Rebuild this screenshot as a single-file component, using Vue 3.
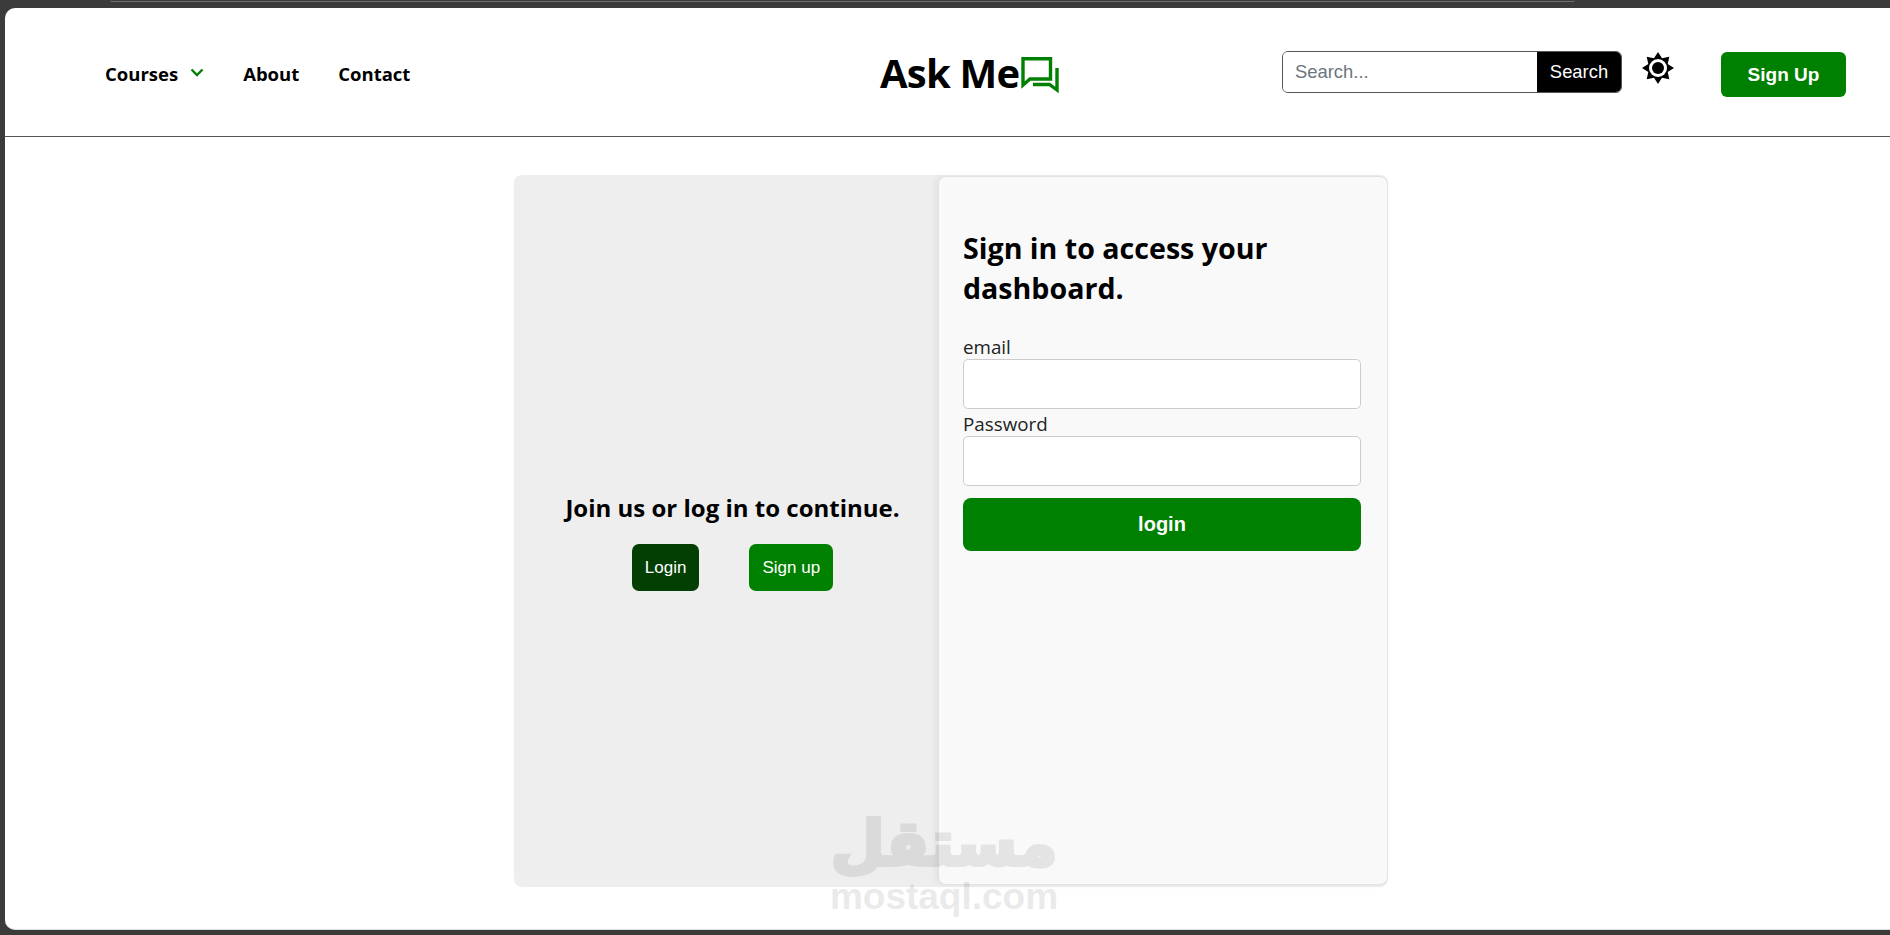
<script setup>
const navLinks = ['About', 'Contact'];

// 8 pointed star for the theme toggle
const starPoints = Array.from({ length: 16 }, (_, i) => {
  const r = i % 2 === 0 ? 16 : 10.5;
  const a = (i * Math.PI) / 8 - Math.PI / 2;
  return `${(16 + r * Math.cos(a)).toFixed(2)},${(16 + r * Math.sin(a)).toFixed(2)}`;
}).join(' ');
</script>

<template>
  <div class="screen">
    <div class="browserTop"><div class="addressEdge"></div></div>
    <div class="page">
      <header class="header">
        <nav class="nav">
          <a class="navLink courses">
            Courses
            <svg class="chevron" width="14" height="9" viewBox="0 0 14 9">
              <path d="M1.5 1.5 7 7l5.5-5.5" fill="none" stroke="#008000" stroke-width="2.4" />
            </svg>
          </a>
          <a v-for="link in navLinks" :key="link" class="navLink">{{ link }}</a>
        </nav>

        <div class="logo">
          <span class="logoText">Ask Me</span>
          <svg class="logoIcon" width="38" height="37" viewBox="0 0 38 37">
            <path d="M2 1.7H29.5V22H9L2 28Z" fill="none" stroke="#008000" stroke-width="3.4" />
            <path d="M36 11V33L28.5 27.5H12" fill="none" stroke="#008000" stroke-width="3.4" />
          </svg>
        </div>

        <div class="headerRight">
          <form class="search" @submit.prevent>
            <input class="searchInput" type="text" placeholder="Search..." />
            <button class="searchBtn" type="button">Search</button>
          </form>
          <svg class="sun" width="32" height="32" viewBox="0 0 32 32">
            <polygon :points="starPoints" fill="#000" />
            <circle cx="16" cy="16" r="9" fill="#fff" />
            <circle cx="16" cy="16" r="6" fill="#000" />
          </svg>
          <button class="signUpBtn" type="button">Sign Up</button>
        </div>
      </header>

      <main class="main">
        <section class="card">
          <div class="sidePanel">
            <h2 class="sideTitle">Join us or log in to continue.</h2>
            <div class="sideBtns">
              <button class="sideBtn dark" type="button">Login</button>
              <button class="sideBtn" type="button">Sign up</button>
            </div>
          </div>
          <form class="formPanel" @submit.prevent>
            <h1 class="formTitle">Sign in to access your dashboard.</h1>
            <label class="label" for="email">email</label>
            <input id="email" class="field" type="email" />
            <label class="label" for="password">Password</label>
            <input id="password" class="field" type="password" />
            <button class="loginBtn" type="button">login</button>
          </form>
        </section>
      </main>

      <div class="watermark">
        <span class="wmArabic" dir="rtl">مستقل</span>
        <span class="wmLatin">mostaql.com</span>
      </div>
    </div>
  </div>
</template>

<style>
html,
body {
  margin: 0;
  background: #3b3b3b;
}
</style>

<style scoped>
.screen {
  height: 935px;
  overflow: hidden;
  background: #3b3b3b;
  font-family: "Open Sans", "Noto Sans", sans-serif;
  color: #000;
}

.browserTop {
  height: 8px;
  padding: 0 315px 0 110px;
}

.addressEdge {
  height: 1px;
  border-bottom: 1px solid #6f6f6f;
  border-radius: 0 0 8px 8px;
}

.page {
  position: relative;
  height: 922px;
  margin-left: 5px;
  background: #fff;
  border-radius: 10px 0 0 10px;
  border-bottom: 1px solid #ddd;
  box-sizing: border-box;
  overflow: hidden;
}

.header {
  height: 129px;
  box-sizing: border-box;
  border-bottom: 1px solid #555;
  display: grid;
  grid-template-columns: 775px 402px 1fr;
  align-items: center;
  padding: 0 39px 0 100px;
}

.nav {
  display: flex;
  align-items: center;
  gap: 39px;
  margin-top: 3px;
}

.navLink {
  font-size: 18.5px;
  font-weight: 700;
  line-height: 24px;
}

.courses {
  display: flex;
  align-items: center;
  gap: 12px;
}

.chevron {
  margin-top: -2px;
}

.logo {
  display: flex;
  align-items: flex-start;
  align-self: start;
  margin-top: 38px;
}

.logoText {
  font-size: 40px;
  font-weight: 700;
  line-height: 54px;
  letter-spacing: -0.8px;
}

.logoIcon {
  margin: 11px 0 0 2px;
  flex: none;
}

.headerRight {
  display: flex;
  align-items: flex-start;
  align-self: start;
  margin-top: 43px;
}

.search {
  display: flex;
  width: 340px;
  height: 42px;
  box-sizing: border-box;
  border: 1px solid #555;
  border-radius: 6px;
  overflow: hidden;
}

.searchInput {
  flex: 1;
  min-width: 0;
  border: 0;
  outline: 0;
  padding: 0 12px;
  font: 18.4px "Liberation Sans", Arial, sans-serif;
  color: #212529;
  background: #fff;
}

.searchInput::placeholder {
  color: #6c757d;
  opacity: 1;
}

.searchBtn {
  width: 84px;
  border: 0;
  background: #000;
  color: #fff;
  font: 18.4px "Liberation Sans", Arial, sans-serif;
  padding: 0;
}

.sun {
  margin: 1px 0 0 20px;
  flex: none;
}

.signUpBtn {
  width: 125px;
  height: 45px;
  margin: 1px 0 0 47px;
  border: 0;
  border-radius: 6px;
  background: #008000;
  color: #fff;
  font: 700 19px "Liberation Sans", Arial, sans-serif;
  flex: none;
}

.main {
  display: flex;
  padding: 38px 0 0 509px;
}

.card {
  display: flex;
  width: 874px;
  height: 712px;
  border-radius: 8px;
  background: #eee;
}

.sidePanel {
  width: 424px;
  flex: none;
  box-sizing: border-box;
  padding: 21px 0 0 13px;
  display: flex;
  flex-direction: column;
  align-items: center;
  justify-content: center;
}

.sideTitle {
  margin: 0 0 20px;
  font-size: 24px;
  font-weight: 700;
  line-height: 32px;
}

.sideBtns {
  display: flex;
  gap: 50px;
}

.sideBtn {
  height: 47px;
  padding: 0 13px;
  border: 0;
  border-radius: 7px;
  background: #008000;
  color: #fff;
  font: 17px "Liberation Sans", Arial, sans-serif;
}

.sideBtn.dark {
  background: #033f03;
}

.formPanel {
  flex: 1;
  height: 709px;
  margin-top: 1px;
  box-sizing: border-box;
  padding: 51px 26px 0 24px;
  background: #f9f9f9;
  border: 1px solid #e2e2e2;
  border-radius: 8px;
  box-shadow: -3px 0 6px rgba(0, 0, 0, 0.05);
  display: flex;
  flex-direction: column;
}

.formTitle {
  margin: 0 0 27px;
  font-size: 28.6px;
  font-weight: 700;
  line-height: 40px;
}

.label {
  font-size: 18.8px;
  line-height: 24px;
  color: #222;
}

.field {
  height: 50px;
  box-sizing: border-box;
  margin-bottom: 3px;
  border: 1px solid #ccc;
  border-radius: 5px;
  background: #fff;
  outline: 0;
}

.loginBtn {
  height: 53px;
  margin-top: 9px;
  border: 0;
  border-radius: 8px;
  background: #008000;
  color: #fff;
  font: 700 20px "Liberation Sans", Arial, sans-serif;
}

.watermark {
  position: absolute;
  left: 826px;
  top: 796px;
  width: 226px;
  display: flex;
  flex-direction: column;
  align-items: center;
  color: #000;
  opacity: 0.08;
  pointer-events: none;
}

.wmArabic {
  font: 700 62px/79px "DejaVu Sans", sans-serif;
  -webkit-text-stroke: 4px #000;
}

.wmLatin {
  margin-top: -6px;
  font: 700 37px/40px "Liberation Sans", Arial, sans-serif;
}
</style>
